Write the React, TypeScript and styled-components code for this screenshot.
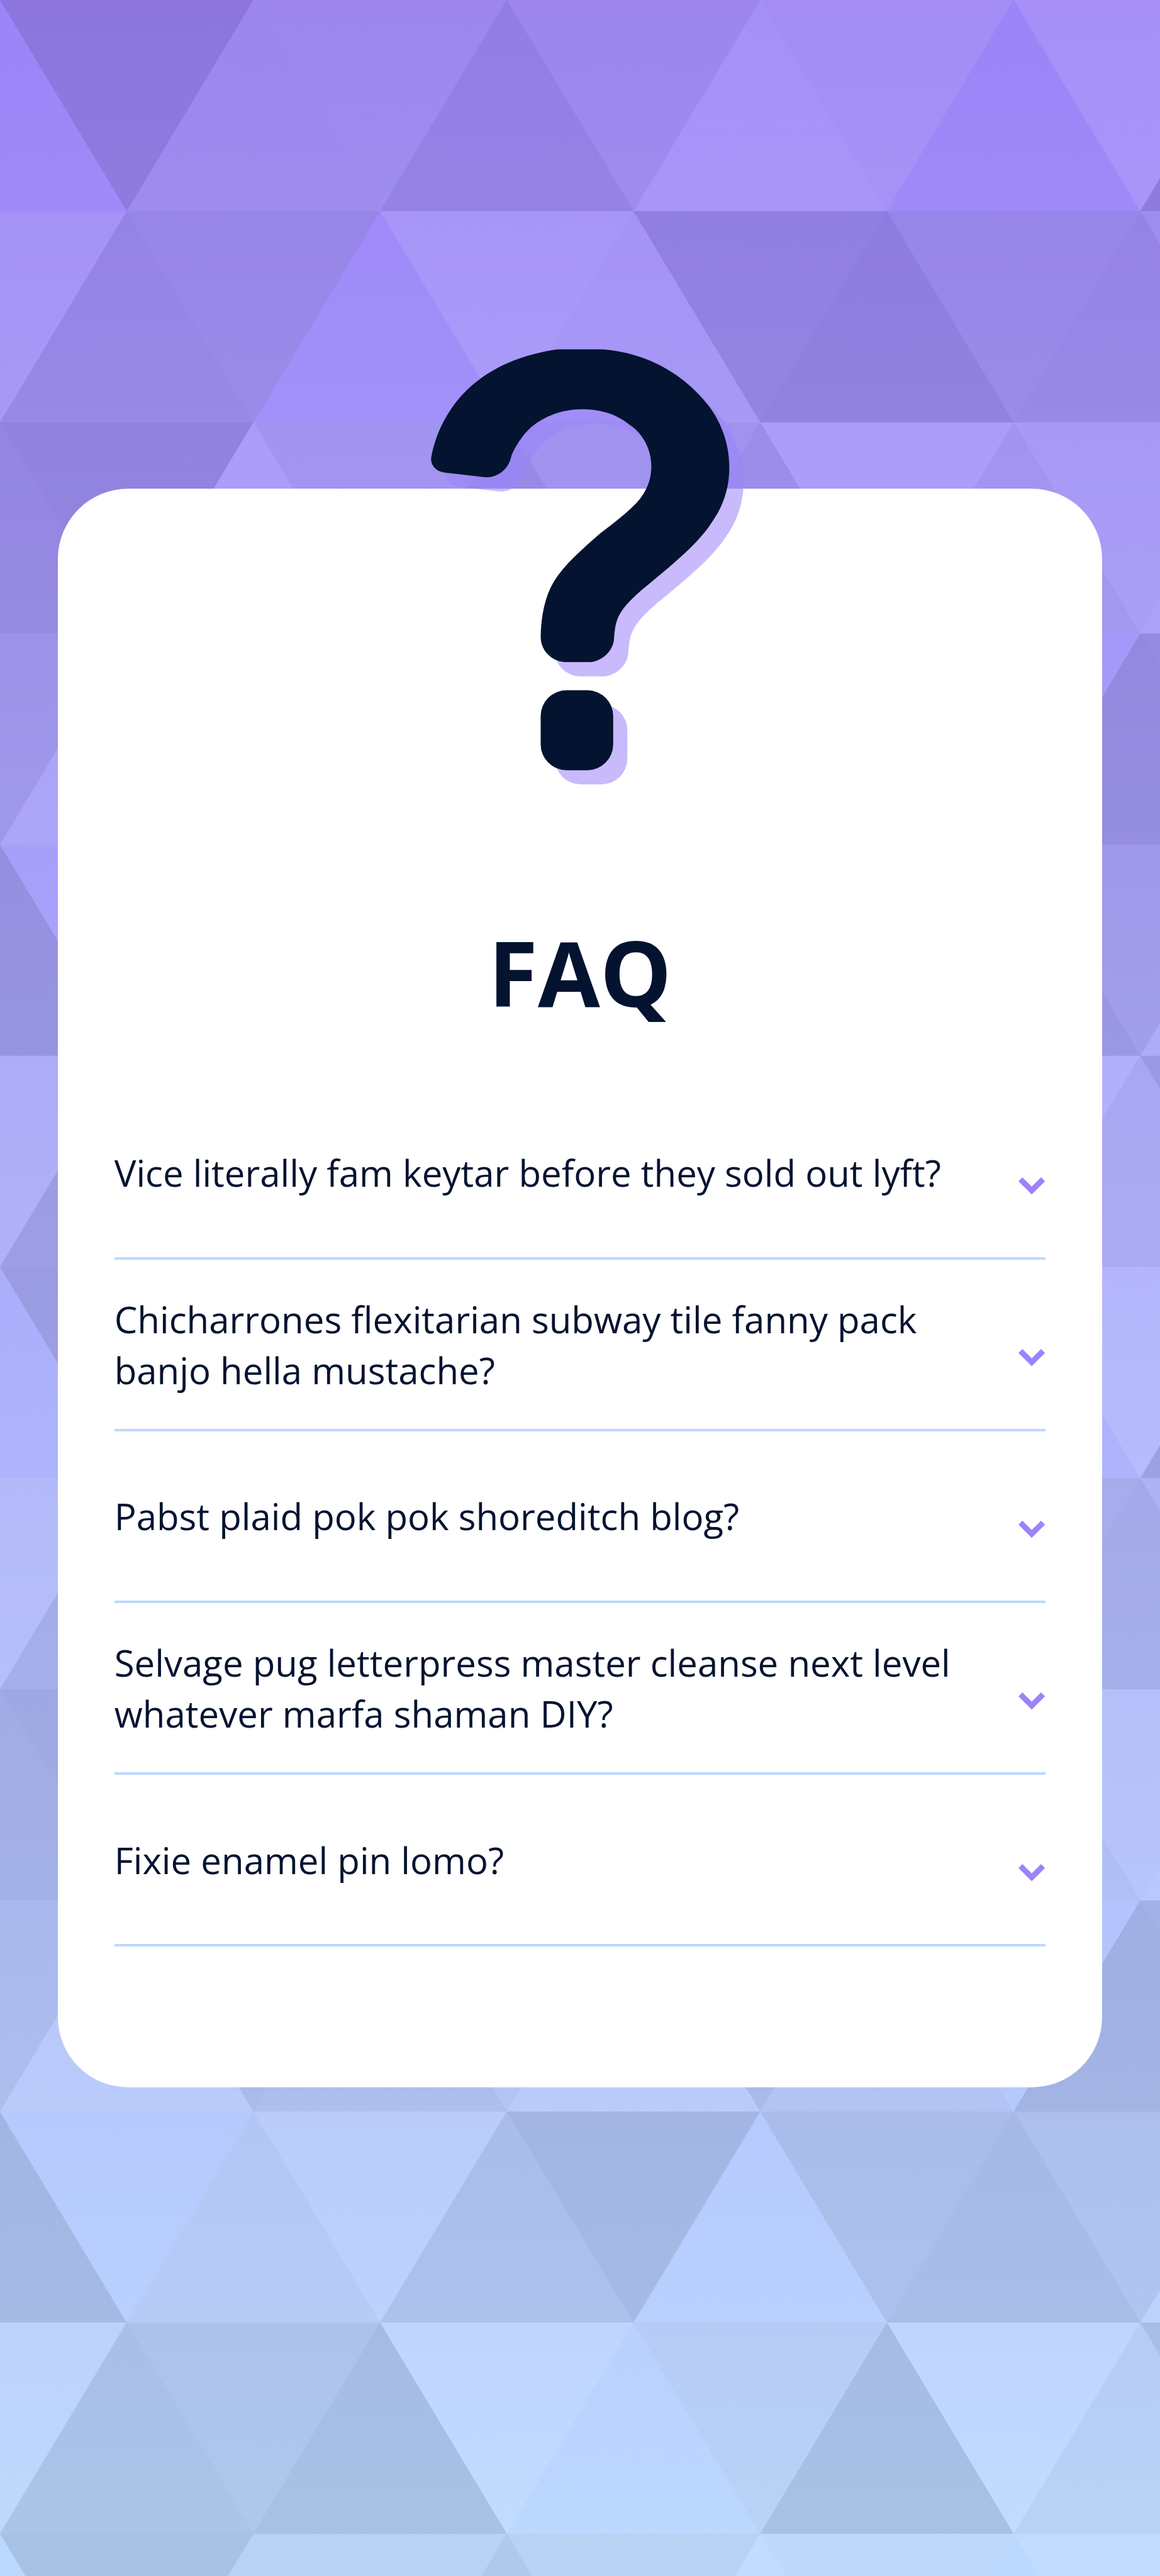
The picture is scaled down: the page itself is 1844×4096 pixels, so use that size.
import React from "react";
import styled, { createGlobalStyle } from "styled-components";

const INK = "#041330";
const VIOLET = "#9c83f8";
const SKY = "#bbd9ff";

const Reset = createGlobalStyle`
  *, *::before, *::after { box-sizing: border-box; }
  body { margin: 0; background: ${SKY}; }
`;

const Page = styled.main`
  position: relative;
  isolation: isolate;
  display: flex;
  align-items: center;
  justify-content: center;
  width: 1844px;
  height: 4096px;
  overflow: hidden;
  background: linear-gradient(180deg, ${VIOLET}, ${SKY});
  font-family: "Open Sans", "Noto Sans", sans-serif;
  color: ${INK};
`;

const Backdrop = styled.svg`
  position: absolute;
  inset: 0;
  z-index: -1;
  width: 100%;
  height: 100%;
`;

const Card = styled.section`
  position: relative;
  width: 1659.6px;
  height: 2542.2px;
  padding: 671px 89.5px 0;
  border-radius: 111.9px;
  background: #fff;
`;

const Emblem = styled.svg`
  position: absolute;
  left: 534.4px;
  top: -275.4px;
  width: 590.8px;
  height: 769.8px;
`;

const Title = styled.h1`
  margin: 0;
  height: 282.3px;
  line-height: 195px;
  font-size: 143.2px;
  font-weight: 700;
  text-align: center;
`;

const List = styled.ul`
  margin: 0;
  padding: 0;
  list-style: none;
`;

const Item = styled.li`
  display: flex;
  align-items: center;
  justify-content: space-between;
  height: 273.03px;
  border-bottom: 4px solid ${SKY};
`;

const Question = styled.span`
  width: 1370px;
  padding-top: 2px;
  font-size: 58.18px;
  line-height: 80.5px;
`;

const Chevron = styled.svg`
  width: 42.2px;
  height: 27.3px;
  margin: 41px 1px 0 0;
  fill: ${VIOLET};
`;

/* Triangle grid. Each cell is [apexX, shade]; "down" hangs from the row's
   upper edge, "up" stands on its lower edge. */
type Cell = [number, string];
type Row = { down: Cell[]; up: Cell[] };

const ROWS: Row[] = [
  {
    down: [[90, "#000"], [270, "#aaa"], [450, "#999"], [630, "#ddd"], [810, "#fff"]],
    up: [[180, "#999"], [360, "#444"], [540, "#fff"], [900, "#000"]],
  },
  {
    down: [[0, "#ddd"], [180, "#666"], [360, "#fff"], [540, "#222"], [720, "#666"], [900, "#aaa"]],
    up: [[90, "#444"], [450, "#ddd"], [630, "#000"], [810, "#444"]],
  },
  {
    down: [[90, "#000"], [270, "#aaa"], [450, "#999"], [630, "#fff"], [810, "#ddd"]],
    up: [[0, "#222"], [180, "#fff"], [360, "#444"], [540, "#666"], [720, "#aaa"], [900, "#fff"]],
  },
  {
    down: [[0, "#666"], [180, "#444"], [360, "#aaa"], [540, "#444"], [900, "#222"]],
    up: [[90, "#ddd"], [270, "#666"], [450, "#ddd"], [630, "#999"], [810, "#000"]],
  },
  {
    down: [[270, "#ddd"], [450, "#000"], [630, "#444"], [810, "#666"]],
    up: [[0, "#000"], [180, "#aaa"], [360, "#444"], [720, "#222"], [900, "#ddd"]],
  },
  {
    down: [[0, "#ddd"], [180, "#444"], [360, "#fff"], [540, "#aaa"], [720, "#fff"], [900, "#222"]],
    up: [[90, "#222"], [270, "#000"], [630, "#000"], [810, "#aaa"]],
  },
];

const Triangles = () => (
  <Backdrop viewBox="0 0 824 1830" preserveAspectRatio="none" aria-hidden>
    <g fillOpacity={0.1}>
      {Array.from({ length: 13 }, (_, r) => {
        const top = r * 150;
        const base = top + 150;
        const row = ROWS[r % 6];
        return (
          <g key={r}>
            {row.down.map(([x, c]) => (
              <polygon key={`d${x}`} fill={c} points={`${x - 90},${top} ${x + 90},${top} ${x},${base}`} />
            ))}
            {row.up.map(([x, c]) => (
              <polygon key={`u${x}`} fill={c} points={`${x - 90},${base} ${x + 90},${base} ${x},${top}`} />
            ))}
          </g>
        );
      })}
    </g>
  </Backdrop>
);

const HOOK =
  "M688 109H880C1090 122 1240 205 1330 296C1388 358 1413 425 1413 492C1413 560 1385 620 1340 668C1290 730 1190 795 1080 865C1010 908 965 942 945 975C930 1000 929 1025 926 1050C920 1090 870 1122 820 1122H726C665 1122 617 1085 617 1040C619 970 635 910 672 862C715 808 790 758 870 704C930 668 1000 628 1037 592C1068 560 1084 528 1084 488C1084 430 1045 380 995 355C945 323 880 303 792 303C700 303 630 328 577 361C535 390 510 425 494 452C482 502 428 526 380 523L208 507.500C172 503 152 482 155 460C166 410 195 350 241 300C310 220 450 135 688 109Z";

const Mark = () => (
  <>
    <path d={HOOK} />
    <rect x={617} y={1213} width={306} height={259} rx={109} ry={84} />
  </>
);

const QuestionEmblem = () => (
  <Emblem viewBox="0 0 1568 1568" preserveAspectRatio="none" aria-hidden>
    <g fill={VIOLET} opacity={0.55} transform="translate(60 46)">
      <Mark />
    </g>
    <g fill={INK}>
      <Mark />
    </g>
  </Emblem>
);

const QUESTIONS = [
  "Vice literally fam keytar before they sold out lyft?",
  "Chicharrones flexitarian subway tile fanny pack banjo hella mustache?",
  "Pabst plaid pok pok shoreditch blog?",
  "Selvage pug letterpress master cleanse next level whatever marfa shaman DIY?",
  "Fixie enamel pin lomo?",
];

export default function App() {
  return (
    <>
      <Reset />
      <Page>
        <Triangles />
        <Card>
          <QuestionEmblem />
          <Title>FAQ</Title>
          <List>
            {QUESTIONS.map((q) => (
              <Item key={q}>
                <Question>{q}</Question>
                <Chevron viewBox="0 0 141 91" preserveAspectRatio="none" aria-hidden>
                  <path d="M0 21L21 0L70.5 49L120 0L141 21L70.5 91Z" />
                </Chevron>
              </Item>
            ))}
          </List>
        </Card>
      </Page>
    </>
  );
}
